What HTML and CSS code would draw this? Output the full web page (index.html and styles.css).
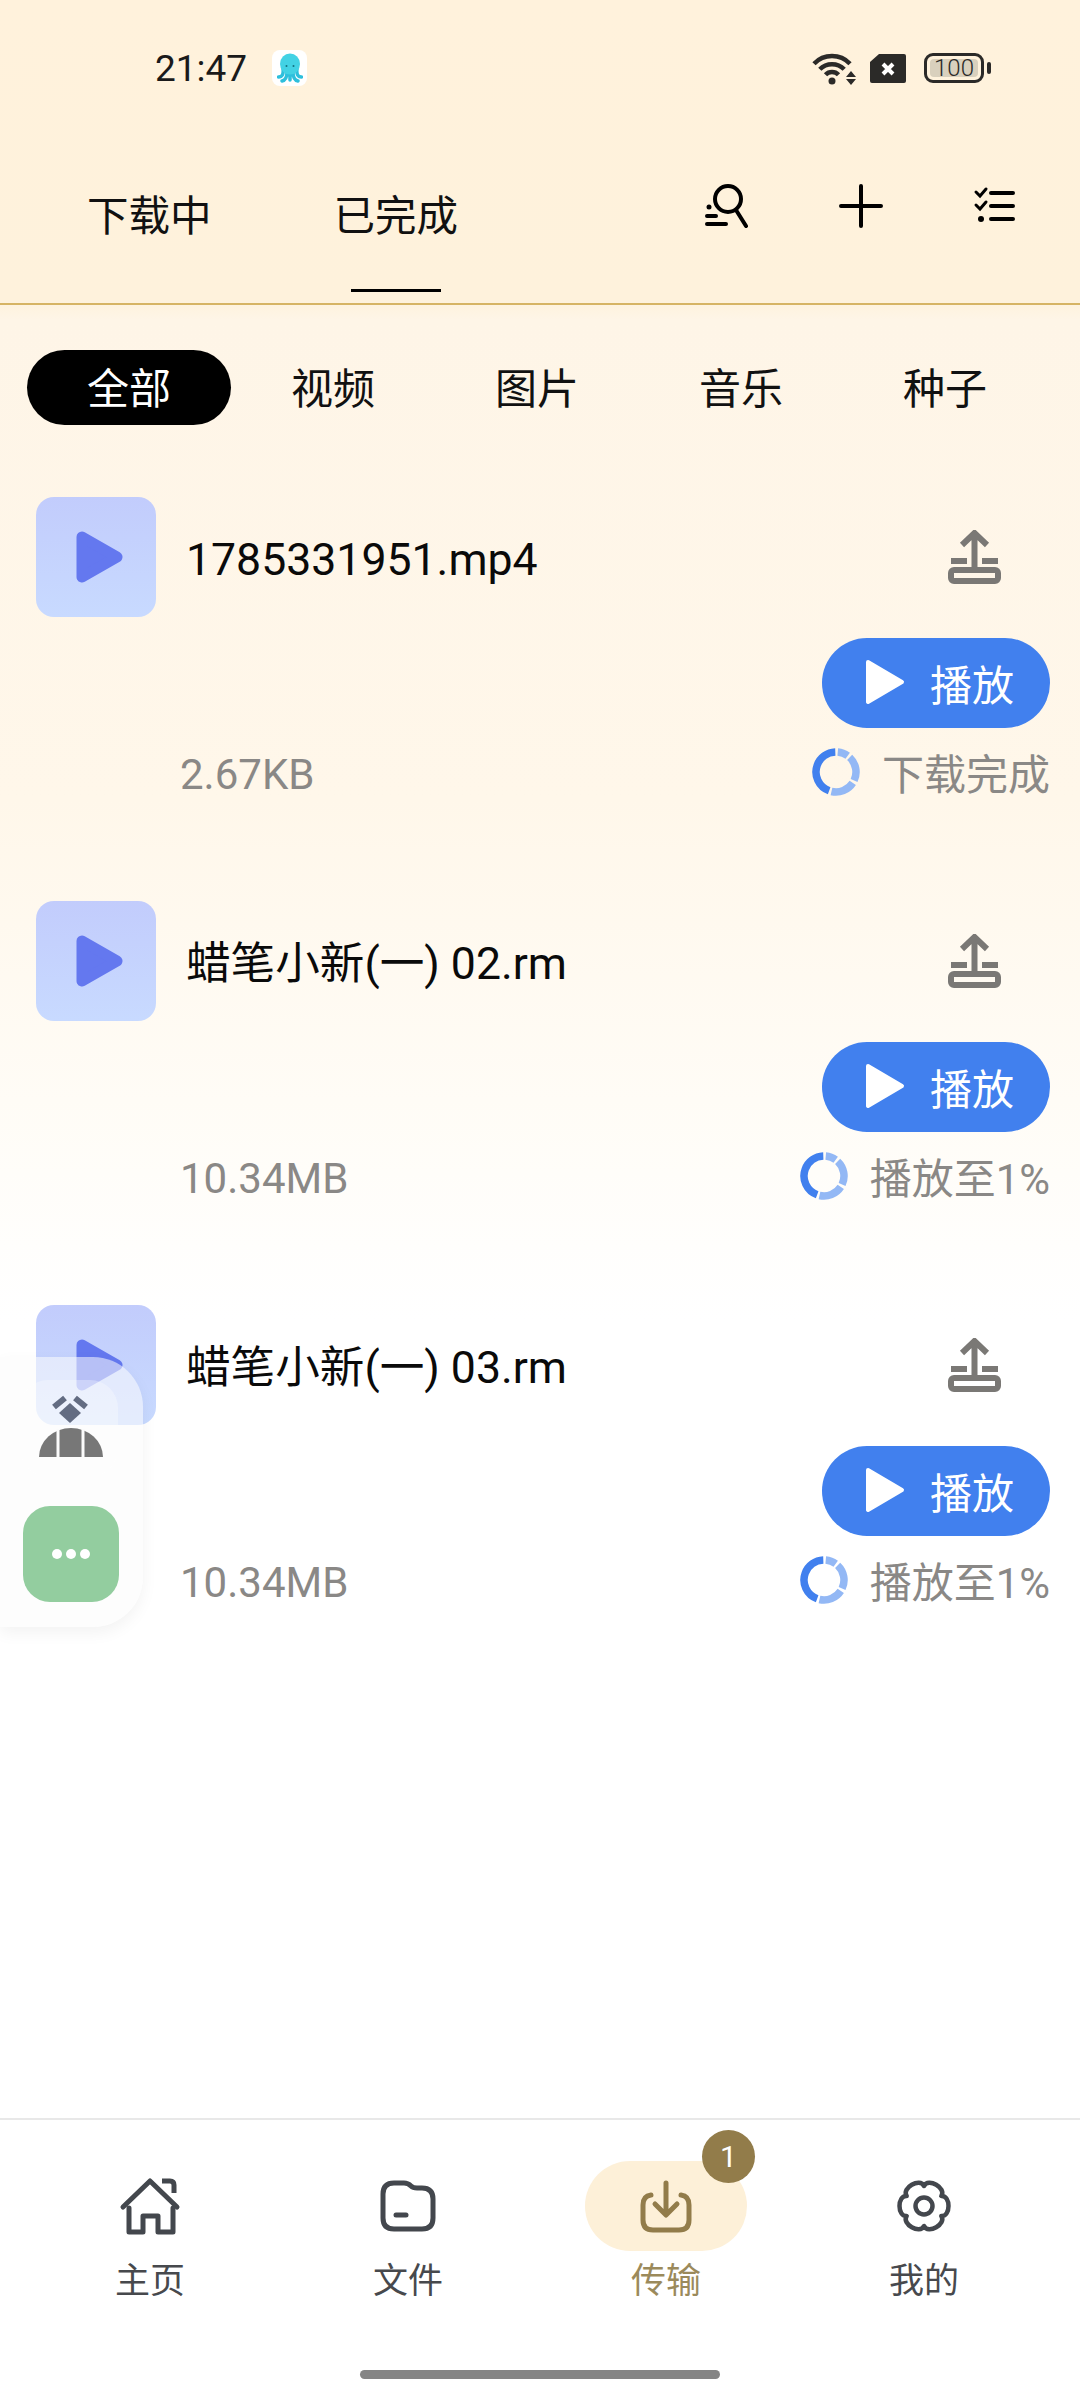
FILE: index.html
```html
<!DOCTYPE html>
<html lang="zh-CN">
<head>
    <meta charset="UTF-8" />
    <meta name="viewport" content="width=device-width, initial-scale=1.0"/>
    <title>传输</title>
    <link rel="stylesheet" href="styles.css">
</head>
<body>
    <svg class="defs" width="0" height="0">
        <symbol id="thumb-play" viewBox="0 0 47 52">
            <path d="M6 6 41 26 6 46Z" fill="#6478ef" stroke="#6478ef" stroke-width="11" stroke-linejoin="round"/>
        </symbol>
        <symbol id="upload" viewBox="0 0 53 54">
            <g fill="none" stroke="#7a7875">
                <path d="M14 15 26.5 3 39 15M26.5 4V40" stroke-width="6"/>
                <path d="M3 31H19M34 31H50" stroke-width="6"/>
                <rect x="3" y="40" width="47" height="11" rx="3" stroke-width="6"/>
            </g>
        </symbol>
        <symbol id="btn-play" viewBox="0 0 40 46">
            <path d="M3 3 37 23 3 43Z" fill="#fff" stroke="#fff" stroke-width="4" stroke-linejoin="round"/>
        </symbol>
        <symbol id="donut" viewBox="0 0 48 48">
            <g fill="none" stroke-width="7.5" transform="rotate(-90 24 24)">
                <circle cx="24" cy="24" r="20" pathLength="360" stroke="#4180ee" stroke-dasharray="158 360" transform="rotate(200 24 24)"/>
                <circle cx="24" cy="24" r="20" pathLength="360" stroke="#93b8f5" stroke-dasharray="31 360" transform="rotate(5 24 24)"/>
                <circle cx="24" cy="24" r="20" pathLength="360" stroke="#93b8f5" stroke-dasharray="72 360" transform="rotate(43 24 24)"/>
                <circle cx="24" cy="24" r="20" pathLength="360" stroke="#93b8f5" stroke-dasharray="70 360" transform="rotate(123 24 24)"/>
            </g>
        </symbol>
    </svg>

    <div class="page">
        <div class="status">
            <span class="time">21:47</span>
            <span class="app-icon">
                <svg width="26" height="30" viewBox="0 0 26 30">
                    <g fill="none" stroke="#2dbfdc" stroke-width="3.5" stroke-linecap="round">
                        <path d="M6 16Q7 24 1.5 24M20 16Q19 24 24.5 24M10 19Q10 27 5 28M16 19Q16 27 21 28M13 20V27"/>
                    </g>
                    <ellipse cx="13" cy="11" rx="10" ry="10.5" fill="#42d2e4"/>
                    <circle cx="9.5" cy="13" r="1" fill="#14707f"/>
                    <circle cx="16.5" cy="13" r="1" fill="#14707f"/>
                </svg>
            </span>
            <span class="status-right">
                <svg width="44" height="33" viewBox="0 0 44 33">
                    <g fill="none" stroke="#2b2a28" stroke-width="4.5">
                        <path d="M2 11.7A25 25 0 0 1 38 11.7"/>
                        <path d="M7.8 17.3A17 17 0 0 1 32.2 17.3"/>
                        <path d="M13.5 22.8A9 9 0 0 1 26.5 22.8"/>
                    </g>
                    <circle cx="20" cy="29" r="3.5" fill="#2b2a28"/>
                    <path d="M39 19 44 25H34ZM34 27H44L39 33Z" fill="#2b2a28"/>
                </svg>
                <svg width="36" height="29" viewBox="0 0 36 29">
                    <path d="M9 0H34Q36 0 36 2V27Q36 29 34 29H2Q0 29 0 27V8Z" fill="#2b2a28"/>
                    <path d="M13 10 23 20M23 10 13 20" stroke="#fff" stroke-width="4"/>
                </svg>
                <span class="battery">
                    <span class="battery-fill">100</span>
                </span>
            </span>
        </div>

        <div class="topbar">
            <div class="tab">下载中</div>
            <div class="tab active">已完成</div>
            <div class="top-icons">
                <svg width="44" height="44" viewBox="0 0 44 44">
                    <g fill="none" stroke="#000" stroke-width="4" stroke-linecap="round">
                        <circle cx="23" cy="15" r="13"/>
                        <path d="M31 26 41 42M2 32H11M2 40H21"/>
                    </g>
                    <circle cx="4" cy="23" r="2.5"/>
                </svg>
                <svg width="44" height="44" viewBox="0 0 44 44">
                    <path d="M22 2V42M2 22H42" stroke="#000" stroke-width="4" stroke-linecap="round"/>
                </svg>
                <svg width="44" height="44" viewBox="0 0 44 44">
                    <g fill="none" stroke="#000" stroke-width="4" stroke-linecap="round">
                        <path d="M18 9H40M18 22H40M18 35H40"/>
                        <path d="M3 8 7 12 13 5M3 21 7 25 13 18" stroke-width="3"/>
                    </g>
                    <circle cx="8" cy="35" r="3"/>
                </svg>
            </div>
        </div>

        <div class="chips">
            <div class="chip active">全部</div>
            <div class="chip">视频</div>
            <div class="chip">图片</div>
            <div class="chip">音乐</div>
            <div class="chip">种子</div>
        </div>

        <div class="list">
            <div class="item">
                <div class="item-top">
                    <div class="thumb"><svg width="47" height="52"><use href="#thumb-play"/></svg></div>
                    <div class="name">1785331951.mp4</div>
                    <svg class="upload" width="53" height="54"><use href="#upload"/></svg>
                </div>
                <div class="play-btn"><svg width="40" height="46"><use href="#btn-play"/></svg>播放</div>
                <div class="meta">
                    <span class="size">2.67KB</span>
                    <span class="state"><svg width="48" height="48"><use href="#donut"/></svg>下载完成</span>
                </div>
            </div>

            <div class="item">
                <div class="item-top">
                    <div class="thumb"><svg width="47" height="52"><use href="#thumb-play"/></svg></div>
                    <div class="name">蜡笔小新(一) 02.rm</div>
                    <svg class="upload" width="53" height="54"><use href="#upload"/></svg>
                </div>
                <div class="play-btn"><svg width="40" height="46"><use href="#btn-play"/></svg>播放</div>
                <div class="meta">
                    <span class="size">10.34MB</span>
                    <span class="state"><svg width="48" height="48"><use href="#donut"/></svg>播放至1%</span>
                </div>
            </div>

            <div class="item">
                <div class="item-top">
                    <div class="thumb"><svg width="47" height="52"><use href="#thumb-play"/></svg></div>
                    <div class="name">蜡笔小新(一) 03.rm</div>
                    <svg class="upload" width="53" height="54"><use href="#upload"/></svg>
                </div>
                <div class="play-btn"><svg width="40" height="46"><use href="#btn-play"/></svg>播放</div>
                <div class="meta">
                    <span class="size">10.34MB</span>
                    <span class="state"><svg width="48" height="48"><use href="#donut"/></svg>播放至1%</span>
                </div>
            </div>
        </div>

        <!-- floating shortcut panel, sits over the third row -->
        <div class="float-panel">
            <div class="float-card">
                <svg width="64" height="62" viewBox="0 0 64 62">
                    <path d="M31 8 42 18 31 28 20 18Z" fill="#636c82"/>
                    <path d="M15 12 26 3M47 12 36 3" stroke="#636c82" stroke-width="6"/>
                    <path d="M0 62A32 29 0 0 1 64 62Z" fill="#777"/>
                    <path d="M19 34V62M44 34V62" stroke="#fbfbfb" stroke-width="3"/>
                </svg>
            </div>
            <div class="float-more"><i></i><i></i><i></i></div>
        </div>

        <div class="nav">
            <div class="nav-items">
                <div class="nav-item">
                    <div class="nav-icon">
                        <svg width="60" height="57" viewBox="0 0 60 57">
                            <g fill="none" stroke="#43474d" stroke-width="5" stroke-linecap="round" stroke-linejoin="round">
                                <path d="M3 29 30 3 57 29"/>
                                <path d="M42 3H50Q54 3 54 7V15" stroke-linecap="butt"/>
                                <path d="M9 30V54H23V38H38V54H53V30"/>
                            </g>
                        </svg>
                    </div>
                    <div class="nav-label">主页</div>
                </div>
                <div class="nav-item">
                    <div class="nav-icon">
                        <svg width="56" height="52" viewBox="0 0 56 52">
                            <g fill="none" stroke="#43474d" stroke-width="5" stroke-linecap="round" stroke-linejoin="round">
                                <path d="M3 14Q3 3 14 3H24Q28 3 31 6Q33 8 37 8H42Q53 8 53 19V38Q53 49 42 49H14Q3 49 3 38Z"/>
                                <path d="M16 35H26"/>
                            </g>
                        </svg>
                    </div>
                    <div class="nav-label">文件</div>
                </div>
                <div class="nav-item current">
                    <div class="nav-icon">
                        <svg width="52" height="53" viewBox="0 0 52 53">
                            <g fill="none" stroke="#927c4a" stroke-width="5" stroke-linecap="round" stroke-linejoin="round">
                                <path d="M11 15Q3 16 3 25V40Q3 50 13 50H39Q49 50 49 40V25Q49 16 41 15"/>
                                <path d="M26 3V34M15 24 26 35 37 24"/>
                            </g>
                        </svg>
                        <span class="badge">1</span>
                    </div>
                    <div class="nav-label">传输</div>
                </div>
                <div class="nav-item">
                    <div class="nav-icon">
                        <svg width="52" height="52" viewBox="0 0 52 52">
                            <g fill="none" stroke="#43474d" stroke-width="4.5" stroke-linejoin="round">
                                <path d="M26 6C30 -2.7 48.85 8.15 43.3 16C52.9 15.1 52.9 36.9 43.3 36C48.85 43.85 30 54.7 26 46C22 54.7 3.15 43.85 8.7 36C-.9 36.9 -.9 15.1 8.7 16C3.15 8.15 22 -2.7 26 6Z"/>
                                <circle cx="26" cy="26" r="8.5"/>
                            </g>
                        </svg>
                    </div>
                    <div class="nav-label">我的</div>
                </div>
            </div>
            <div class="home-bar"></div>
        </div>
    </div>
</body>
</html>
```

FILE: styles.css
```css
* {
    box-sizing: border-box;
}

body {
    margin: 0;
    font-family: Roboto, "Noto Sans CJK SC", sans-serif;
    color: #000;
}

.defs {
    position: absolute;
}

.page {
    position: relative;
    width: 1080px;
    height: 2400px;
    display: flex;
    flex-direction: column;
    overflow: hidden;
    background: linear-gradient(#fff2dc 0, #fef2dc 300px, #fef5e7 320px, #fff7ea 800px, #fffcf6 1100px, #fff 1320px);
}

/* status bar */
.status {
    height: 136px;
    display: flex;
    align-items: center;
    padding: 0 96px 0 155px;
}

.time {
    font-size: 37px;
    color: #1a1a1a;
}

.app-icon {
    width: 35px;
    height: 36px;
    margin-left: 25px;
    background: #fff;
    border-radius: 8px;
    display: flex;
    align-items: center;
    justify-content: center;
}

.status-right {
    margin-left: auto;
    display: flex;
    align-items: center;
    gap: 14px;
}

.battery {
    position: relative;
    width: 60px;
    height: 30px;
    margin-left: 4px;
    padding: 3px;
    border: 3px solid #2b2a28;
    border-radius: 9px;
    display: flex;
}

.battery::after {
    content: "";
    position: absolute;
    right: -10px;
    top: 6px;
    width: 4px;
    height: 12px;
    background: #2b2a28;
    border-radius: 2px;
}

.battery-fill {
    flex: 1;
    background: #d9d0bd;
    border-radius: 4px;
    font-size: 24px;
    font-weight: 300;
    line-height: 18px;
    text-align: center;
    color: #2b2a28;
}

/* top tabs */
.topbar {
    height: 169px;
    display: flex;
    padding: 0 63px 0 87px;
    gap: 122px;
    border-bottom: 2px solid #d6b465;
}

.tab {
    padding-top: 52px;
    font-size: 41.5px;
    line-height: 58px;
    position: relative;
    color: #111;
}

.tab.active::after {
    content: "";
    display: block;
    width: 90px;
    height: 3px;
    margin: 43px auto 0;
    background: #000;
}

.top-icons {
    margin-left: auto;
    margin-top: 48px;
    display: flex;
    align-items: flex-start;
    gap: 90px;
}

/* filter chips */
.chips {
    margin: 45px 27px 0;
    display: grid;
    grid-template-columns: repeat(5, 204px);
}

.chip {
    height: 75px;
    border-radius: 38px;
    font-size: 42px;
    line-height: 80px;
    text-align: center;
    color: #111;
}

.chip.active {
    background: #000;
    color: #fff;
}

/* file rows */
.list {
    margin-top: 72px;
    flex: 1;
}

.item {
    padding: 0 30px 103px 36px;
}

.item-top {
    display: flex;
    align-items: center;
}

.thumb {
    width: 120px;
    height: 120px;
    border-radius: 18px;
    background: linear-gradient(#c2ccfc, #c8daff);
    display: flex;
    align-items: center;
    justify-content: center;
    padding-left: 6px;
}

.name {
    margin-left: 30px;
    margin-top: 5px;
    font-size: 44.6px;
    line-height: 62px;
    color: #0a0a0a;
}

.upload {
    margin-left: auto;
    margin-right: 49px;
}

.play-btn {
    width: 228px;
    height: 90px;
    margin: 21px 0 0 auto;
    padding: 0 0 2px 43px;
    border-radius: 45px;
    background: #4180ee;
    color: #fff;
    font-size: 42px;
    display: flex;
    align-items: center;
    gap: 25px;
}

.meta {
    height: 50px;
    margin-top: 20px;
    padding-left: 144px;
    display: flex;
    align-items: center;
    justify-content: space-between;
    font-size: 42px;
    color: #8a8886;
}

.size {
    margin-top: 3px;
}

.state {
    display: flex;
    align-items: center;
    gap: 22px;
    margin-bottom: 3px;
}

/* floating panel */
.float-panel {
    position: absolute;
    left: 0;
    top: 1357px;
    width: 143px;
    height: 270px;
    padding: 23px 25px 0 20px;
    background: rgba(251, 251, 251, 0.55);
    border-radius: 0 50px 50px 0;
    box-shadow: 0 6px 16px rgba(0, 0, 0, 0.05);
}

.float-card {
    width: 98px;
    height: 97px;
    padding: 15px 0 0 19px;
    background: rgba(255, 255, 255, 0.3);
    border-radius: 28px;
}

.float-more {
    width: 96px;
    height: 96px;
    margin: 29px 0 0 3px;
    background: #93cd9f;
    border-radius: 27px;
    display: flex;
    align-items: center;
    justify-content: center;
    gap: 4px;
}

.float-more i {
    width: 10px;
    height: 10px;
    background: #fff;
    border-radius: 50%;
}

/* bottom nav */
.nav {
    height: 282px;
    padding-top: 41px;
    background: #fff;
    border-top: 2px solid #e8e8e8;
}

.nav-items {
    display: grid;
    grid-template-columns: repeat(4, 258px);
    padding-left: 21px;
}

.nav-item {
    display: flex;
    flex-direction: column;
    align-items: center;
    color: #47494d;
}

.nav-icon {
    position: relative;
    width: 162px;
    height: 90px;
    border-radius: 45px;
    display: flex;
    align-items: center;
    justify-content: center;
}

.nav-icon svg {
    overflow: visible;
}

.nav-item.current {
    color: #9b8a5b;
}

.nav-item.current .nav-icon {
    background: #fdf0d8;
}

.badge {
    position: absolute;
    left: 117px;
    top: -31px;
    width: 53px;
    height: 53px;
    border-radius: 50%;
    background: #927c4a;
    color: #fff;
    font-size: 30px;
    line-height: 53px;
    text-align: center;
}

.nav-label {
    margin-top: 7px;
    font-size: 35px;
    line-height: 48px;
}

.home-bar {
    width: 360px;
    height: 9px;
    margin: 64px auto 0;
    background: #858585;
    border-radius: 5px;
}
```
